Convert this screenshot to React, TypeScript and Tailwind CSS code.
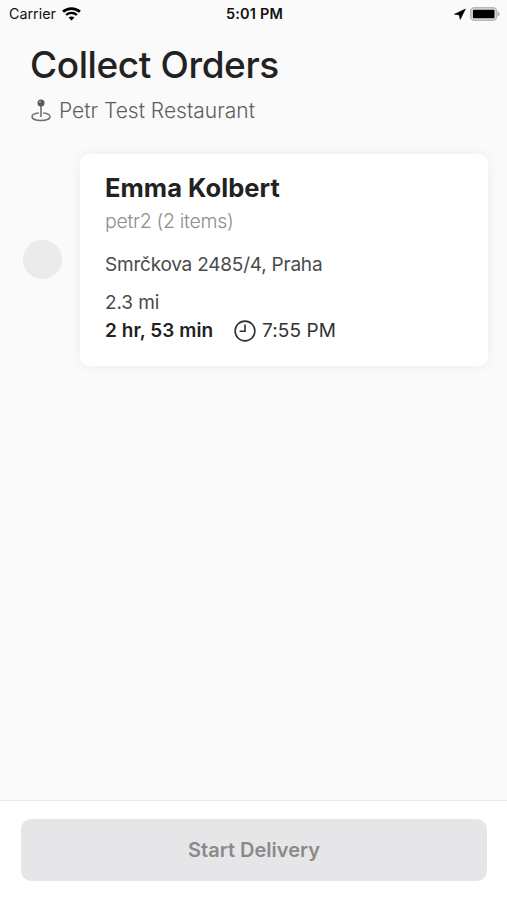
function WifiIcon() {
  return (
    <svg viewBox="0 0 18 14" className="w-[19px] h-[14px]" preserveAspectRatio="none" fill="none" stroke="#000">
      <path d="M1 4.8C5.4 0.6 12.6 0.6 17 4.8" strokeWidth="2.6" />
      <path d="M3.9 8C6.8 5.2 11.2 5.2 14.1 8" strokeWidth="2.3" />
      <path d="M9 13.4L6.2 10.6C7.8 9.1 10.2 9.1 11.8 10.6Z" fill="#000" stroke="none" />
    </svg>
  );
}

function LocationArrow() {
  return (
    <svg viewBox="0 0 12 12" className="w-3 h-3" fill="#000" stroke="#000" strokeWidth="0.6" strokeLinejoin="round">
      <path d="M11.4 1L0.5 6.2L5.3 6.9L6.2 11.4Z" />
    </svg>
  );
}

function BatteryIcon() {
  return (
    <svg viewBox="0 0 30 14" className="w-[30px] h-[14px]">
      <rect x="0.8" y="0.8" width="25.8" height="12.4" rx="3.6" fill="#e0e0e0" stroke="#b8b8b8" strokeWidth="1.6" />
      <rect x="2.9" y="2.7" width="21.6" height="8.6" rx="1" fill="#000" />
      <path d="M27.6 4.6C30.4 5.6 30.4 8.4 27.6 9.4Z" fill="#b0b0b0" />
    </svg>
  );
}

function PinIcon() {
  return (
    <svg viewBox="0 0 20 24" className="w-5 h-6" fill="none">
      <path d="M7.8 15C3.8 15.3 1 16.7 1 18.7C1 20.9 5 22.4 10 22.4S19 20.9 19 18.7C19 16.7 16.2 15.3 12.2 15" stroke="#6e6e6a" strokeWidth="1.5" />
      <path d="M10 7V19" stroke="#6e6e6a" strokeWidth="1.6" />
      <circle cx="10" cy="4.9" r="3.5" fill="#5a5a57" />
      <circle cx="9" cy="3.9" r="1" fill="#aaaaa7" />
    </svg>
  );
}

function ClockIcon() {
  return (
    <svg viewBox="0 0 22 22" className="w-[22px] h-[22px]" fill="none" stroke="#2f2f2f" strokeWidth="1.6">
      <circle cx="11" cy="11" r="9.9" />
      <path d="M11 4.6V11.2H5.6" />
    </svg>
  );
}

function StatusBar() {
  return (
    <div className="grid grid-cols-3 items-center h-[27px] pl-[9px] pr-[7px]">
      <div className="flex items-center gap-[6px]">
        <span className="text-[14.3px]">Carrier</span>
        <WifiIcon />
      </div>
      <span className="text-center text-[14.5px] font-semibold tracking-[0.2px]">5:01 PM</span>
      <div className="flex items-center justify-end gap-1">
        <LocationArrow />
        <BatteryIcon />
      </div>
    </div>
  );
}

function OrderCard() {
  return (
    <div className="flex-1 h-[212px] rounded-[10px] bg-white pl-[25px] pt-[17px] shadow-[0_0_12px_rgba(0,0,0,0.06)] whitespace-nowrap">
      <h2 className="text-[25.5px] leading-[34px] font-bold tracking-[0.05px] text-[#222]">Emma Kolbert</h2>
      <p className="text-[19.5px] leading-[32px] font-light tracking-[-0.3px] text-[#8e8e8e]">petr2 (2 items)</p>
      <p className="mt-[13px] text-[19px] leading-[30px] tracking-[-0.22px] text-[#4a4a4a]">Smrčkova 2485/4, Praha</p>
      <p className="mt-2 text-[19px] leading-[29px] tracking-[-0.1px] text-[#4a4a4a]">2.3 mi</p>
      <div className="flex items-center h-[28px] text-[19px] text-[#222]">
        <span className="w-[129px] font-semibold tracking-[0.05px]">2 hr, 53 min</span>
        <ClockIcon />
        <span className="ml-[6px] tracking-[0.1px] text-[#333]">7:55 PM</span>
      </div>
    </div>
  );
}

export default function App() {
  return (
    <div className="flex flex-col h-screen bg-[#fafafa] text-[#111] font-['Inter','Liberation_Sans',sans-serif]">
      <StatusBar />
      <header className="pl-[30px] pt-[14px]">
        <h1 className="text-[37px] leading-[48px] font-medium tracking-[-0.4px] text-[#222]">Collect Orders</h1>
        <div className="flex items-center gap-2 h-[42px] pl-[1px]">
          <PinIcon />
          <span className="pt-0.5 text-[21px] font-light text-[#5e5e5b]">Petr Test Restaurant</span>
        </div>
      </header>
      <main className="flex-1 flex items-start pt-[23px] pl-[23px] pr-[19px]">
        <div className="mt-[86px] mr-[18px] w-[39px] h-[39px] rounded-full bg-[#ebebeb]" />
        <OrderCard />
      </main>
      <footer className="h-[100px] border-t border-[#ebebeb] bg-white pl-[21px] pr-[20px] pt-[18px]">
        <button className="w-full h-[62px] rounded-[10px] bg-[#e6e6e8] text-[20px] font-semibold text-[#8a8a8a]">
          Start Delivery
        </button>
      </footer>
    </div>
  );
}
